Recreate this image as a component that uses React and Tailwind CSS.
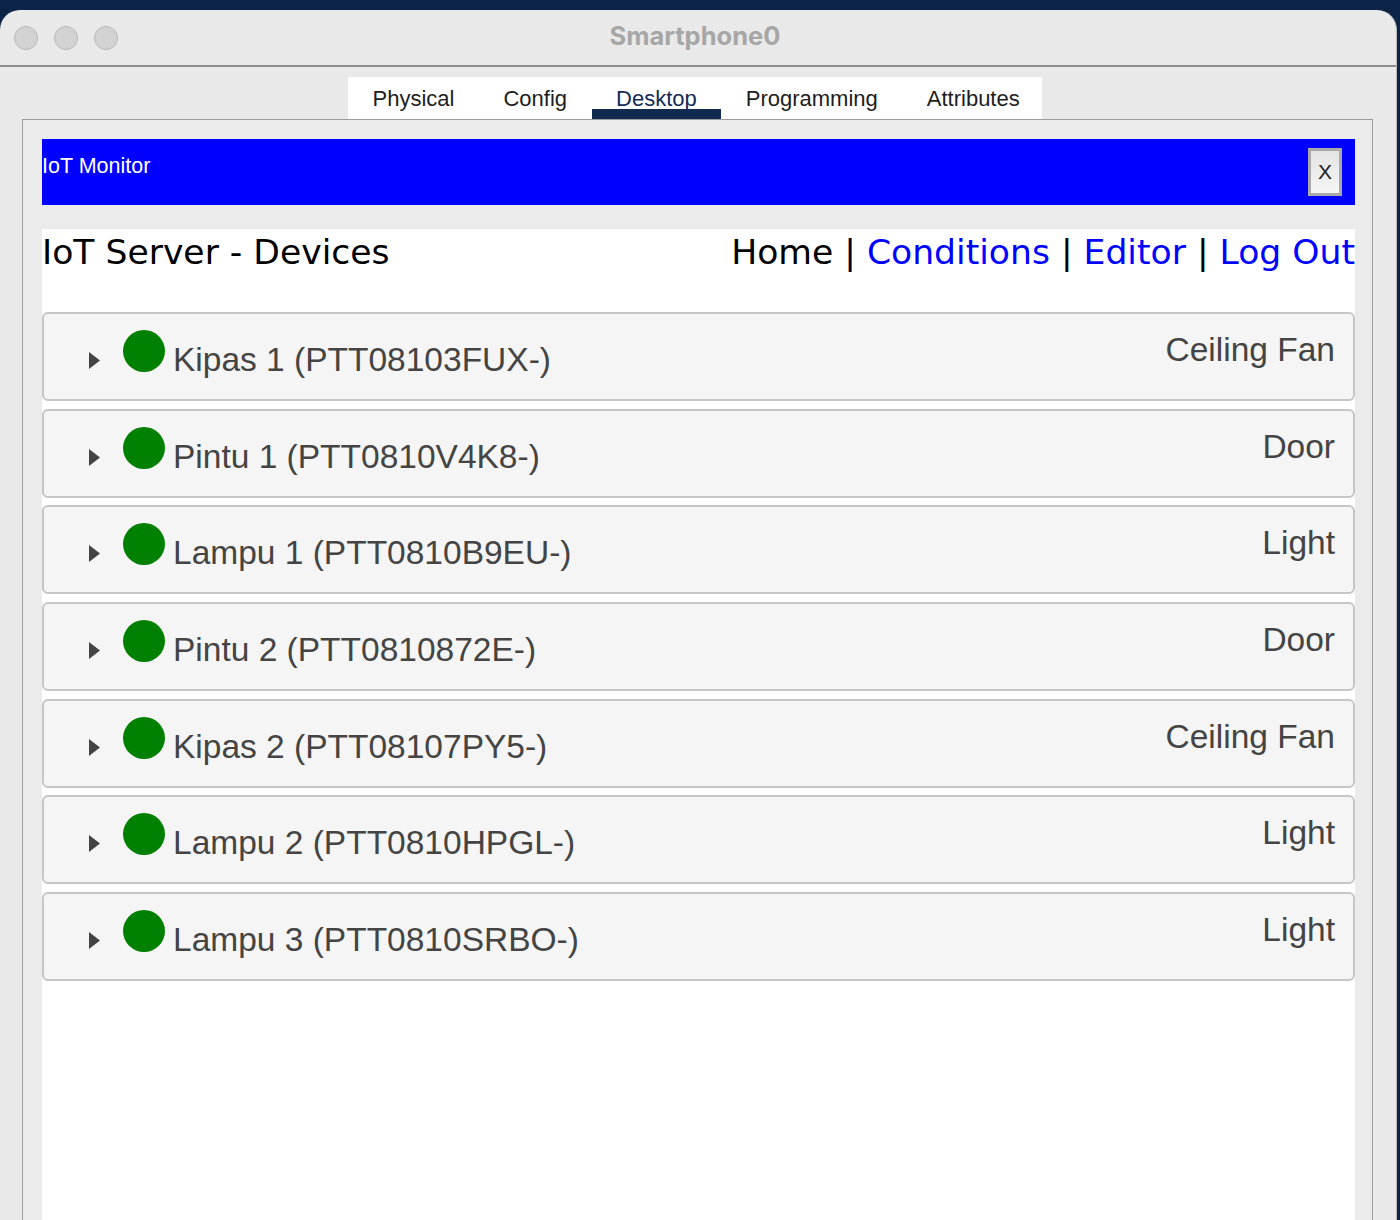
const tabs = ['Physical', 'Config', 'Desktop', 'Programming', 'Attributes'];

const devices = [
  { name: 'Kipas 1 (PTT08103FUX-)', type: 'Ceiling Fan' },
  { name: 'Pintu 1 (PTT0810V4K8-)', type: 'Door' },
  { name: 'Lampu 1 (PTT0810B9EU-)', type: 'Light' },
  { name: 'Pintu 2 (PTT0810872E-)', type: 'Door' },
  { name: 'Kipas 2 (PTT08107PY5-)', type: 'Ceiling Fan' },
  { name: 'Lampu 2 (PTT0810HPGL-)', type: 'Light' },
  { name: 'Lampu 3 (PTT0810SRBO-)', type: 'Light' },
];

const DeviceRow = ({ name, type }) => (
  <div className="h-[89px] flex items-start rounded-[6px] border-2 border-[#c6c6c6] bg-[#f5f5f5] text-[#444] font-['Liberation_Sans',Arial,sans-serif] text-[33.5px]">
    <svg className="ml-[44px] mt-[36px] w-[13px] h-[21px] shrink-0" viewBox="0 0 13 21">
      <polygon points="1,2 12,10.5 1,19" fill="#444" />
    </svg>
    <div className="ml-[22px] mt-[16px] w-[42px] h-[42px] rounded-full bg-[#008000] shrink-0" />
    <div className="ml-[8px] mt-[26px] leading-[40px] whitespace-nowrap">{name}</div>
    <div className="ml-auto mr-[18px] mt-[16px] leading-[40px] whitespace-nowrap">{type}</div>
  </div>
);

const App = () => {
  return (
    <div className="w-[1400px] h-[1220px] overflow-hidden bg-[#0c2448] pt-[10px]">
      <div className="w-[1397px] h-[1210px] bg-[#e9e9e9] rounded-t-[20px] border-r border-[#b8b8b8] overflow-hidden">
        {/* title bar */}
        <div className="relative h-[57px] flex items-center border-b-2 border-[#8c8c8c] pl-[14px] gap-[16px]">
          {[0, 1, 2].map((i) => (
            <div key={i} className="w-[24px] h-[24px] rounded-full bg-[#d2d2d2] border border-[#b9b9b9]" />
          ))}
          <div className="absolute left-0 right-0 top-[11px] text-center font-['Inter',sans-serif] font-bold text-[25.5px] leading-[30px] text-[#a6a6a6] pr-[6px]">
            Smartphone0
          </div>
        </div>

        {/* tabs */}
        <div className="pt-[10px] pl-[348px]">
          <div className="flex w-[694px] h-[42px] bg-white font-['Liberation_Sans',Arial,sans-serif] text-[22px] text-[#1d1d1d]">
            {tabs.map((t) => (
              <div
                key={t}
                className={
                  t === 'Desktop'
                    ? 'px-[24.5px] flex items-start pt-[5px] border-b-[10px] border-[#112a4f] text-[#132c56]'
                    : 'px-[24.5px] flex items-start pt-[5px]'
                }
              >
                {t}
              </div>
            ))}
          </div>
        </div>

        {/* panel */}
        <div className="ml-[22px] w-[1351px] h-[1110px] border border-[#9c9c9c] bg-[#ebebeb] pl-[19px] pr-[17px] pt-[19px]">
          <div className="h-[66px] bg-[#0000ff] flex items-start justify-between">
            <div className="mt-[14px] text-white font-['Liberation_Sans',Arial,sans-serif] text-[21.5px] leading-[26px]">
              IoT Monitor
            </div>
            <button className="mt-[9px] mr-[13px] w-[34px] h-[48px] border-[3px] border-[#a9a9a9] bg-gradient-to-b from-[#e4e4e4] to-[#f6f6f6] text-[#222] font-['Liberation_Sans',Arial,sans-serif] text-[21px]">
              X
            </button>
          </div>

          <div className="mt-[24px] h-[1000px] bg-white">
            <div className="pt-[2px] flex justify-between items-start font-['DejaVu_Sans',Verdana,sans-serif] text-[34.6px] leading-[42px]">
              <div className="text-black">IoT Server - Devices</div>
              <div className="whitespace-nowrap">
                <span className="text-black">Home | </span>
                <span className="text-[#0000ff]">Conditions</span>
                <span className="text-black"> | </span>
                <span className="text-[#0000ff]">Editor</span>
                <span className="text-black"> | </span>
                <span className="text-[#0000ff]">Log Out</span>
              </div>
            </div>

            <div className="mt-[39px] flex flex-col gap-[7.7px]">
              {devices.map((d) => (
                <DeviceRow key={d.name} {...d} />
              ))}
            </div>
          </div>
        </div>
      </div>
    </div>
  );
};

export default App;
